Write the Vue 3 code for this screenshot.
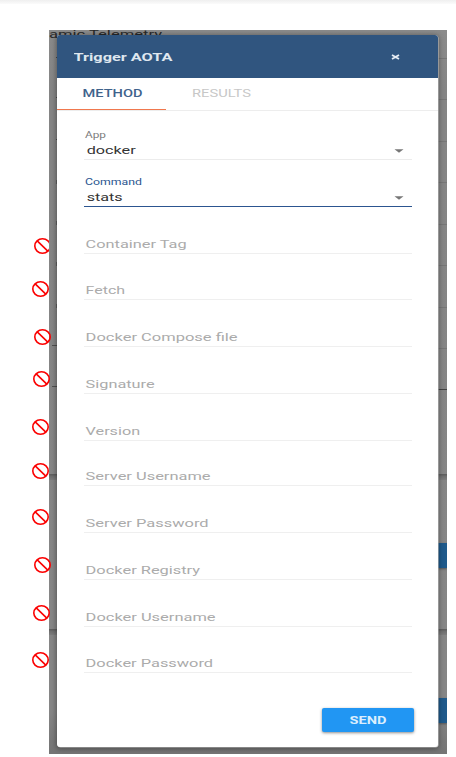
<script setup>
const fields = [
  { label: 'Container Tag', width: 101, height: 47 },
  { label: 'Fetch', width: 39.5, height: 46 },
  { label: 'Docker Compose file', width: 152, height: 47 },
  { label: 'Signature', width: 69, height: 47 },
  { label: 'Version', width: 54.5, height: 47 },
  { label: 'Server Username', width: 125, height: 45 },
  { label: 'Server Password', width: 123, height: 47 },
  { label: 'Docker Registry', width: 114.5, height: 47 },
  { label: 'Docker Username', width: 130, height: 47 },
  { label: 'Docker Password', width: 127.5, height: 46 },
]

const selects = [
  { label: 'App', labelWidth: 21, value: 'docker', valueWidth: 49, active: false },
  { label: 'Command', labelWidth: 57, value: 'stats', valueWidth: 36, active: true },
]

// Free-floating annotation marks beside the dialog
const marks = [
  { x: 34, y: 238, cut: true },
  { x: 32, y: 281 },
  { x: 34, y: 329 },
  { x: 33, y: 371 },
  { x: 32, y: 419 },
  { x: 32, y: 463 },
  { x: 32, y: 509 },
  { x: 34, y: 557 },
  { x: 33, y: 605 },
  { x: 32, y: 652 },
]

// Slivers of the dimmed page on either side of the dialog
const rules = [
  { y: 28, side: 'right', kind: 'thin' },
  { y: 69, side: 'right', kind: 'thin' },
  { y: 111, side: 'right', kind: 'thin' },
  { y: 152, side: 'right', kind: 'thin' },
  { y: 194, side: 'right', kind: 'thin' },
  { y: 235, side: 'right', kind: 'thin' },
  { y: 277, side: 'right', kind: 'thin' },
  { y: 318, side: 'right', kind: 'thin' },
  { y: 359, side: 'right', kind: 'dark' },
  { y: 444, side: 'both', kind: 'edge' },
  { y: 513, side: 'right', kind: 'button' },
  { y: 599, side: 'both', kind: 'edge' },
  { y: 668, side: 'right', kind: 'button' },
  { y: 27, side: 'tick', kind: 'dot' },
  { y: 67, side: 'tick', kind: 'dot' },
  { y: 109, side: 'tick', kind: 'dot' },
  { y: 150, side: 'tick', kind: 'dot tall' },
  { y: 191, side: 'tick', kind: 'dot tall' },
  { y: 232, side: 'tick', kind: 'dot tall' },
  { y: 274, side: 'tick', kind: 'dot tall' },
  { y: 315, side: 'tick', kind: 'dash' },
  { y: 356, side: 'tick', kind: 'dash' },
]
</script>

<template>
  <div class="page">
    <div class="topbar"></div>
    <main class="shot">
      <svg class="behind-title" width="120" height="12">
        <text x="0" y="8" textLength="113" lengthAdjust="spacingAndGlyphs">amic Telemetry</text>
      </svg>
      <i
        v-for="(r, i) in rules"
        :key="i"
        class="rule"
        :class="[r.side, r.kind]"
        :style="{ top: r.y + 'px' }"
      ></i>

      <section class="dialog">
        <header class="head">
          <svg width="110" height="21">
            <text x="-0.5" y="15" textLength="99" lengthAdjust="spacingAndGlyphs">Trigger AOTA</text>
          </svg>
          <svg class="close" width="9" height="6" viewBox="0 0 9 6">
            <path d="M1 .9L8 5.1M8 .9L1 5.1" />
          </svg>
        </header>
        <nav class="tabs">
          <div class="tab on">
            <svg width="70" height="16">
              <text x="-0.5" y="12.4" textLength="60" lengthAdjust="spacingAndGlyphs">METHOD</text>
            </svg>
          </div>
          <div class="tab">
            <svg width="70" height="16">
              <text x="0" y="12.4" textLength="59" lengthAdjust="spacingAndGlyphs">RESULTS</text>
            </svg>
          </div>
        </nav>

        <div class="form">
          <div v-for="s in selects" :key="s.label" class="select" :class="{ active: s.active }">
            <svg class="caption" width="80" height="14">
              <text x="1" y="9.5" :textLength="s.labelWidth" lengthAdjust="spacingAndGlyphs">{{ s.label }}</text>
            </svg>
            <div class="choice">
              <svg width="80" height="17">
                <text x="2.7" y="12.4" :textLength="s.valueWidth" lengthAdjust="spacingAndGlyphs">{{ s.value }}</text>
              </svg>
              <svg class="caret" width="10" height="4" viewBox="0 0 10 4">
                <path d="M.5 .3H9.5L5 3.8Z" />
              </svg>
            </div>
          </div>
          <div v-for="f in fields" :key="f.label" class="field" :style="{ height: f.height + 'px' }">
            <svg width="200" height="18">
              <text x="1.6" y="13" :textLength="f.width" lengthAdjust="spacingAndGlyphs">{{ f.label }}</text>
            </svg>
          </div>
        </div>

        <footer class="foot">
          <button class="send">
            <svg width="40" height="14">
              <text x="1.5" y="11" textLength="37" lengthAdjust="spacingAndGlyphs">SEND</text>
            </svg>
          </button>
        </footer>
      </section>
    </main>

    <svg
      v-for="(m, i) in marks"
      :key="i"
      class="mark"
      :class="{ cut: m.cut }"
      :style="{ left: m.x + 'px', top: m.y + 'px' }"
      width="17"
      height="16"
      viewBox="0 0 17 16"
    >
      <ellipse cx="8.5" cy="8" rx="7.7" ry="7.2" />
      <path d="M3.2 2.9L13.8 13.1" />
    </svg>
  </div>
</template>

<style>
body {
  margin: 0;
  background: #fff;
}
</style>

<style scoped>
.page {
  position: relative;
  width: 456px;
  height: 757px;
  overflow: hidden;
  font-family: Roboto, sans-serif;
}
.page svg {
  display: block;
  flex: none;
}
.topbar {
  height: 4px;
  margin-bottom: 26px;
  background: linear-gradient(#efefef, #fbfbfb);
}
.shot {
  position: relative;
  box-sizing: border-box;
  width: 398px;
  height: 724px;
  margin-left: 49px;
  padding: 5px 8px 0;
  overflow: hidden;
  background: linear-gradient(#8b8b8b, #858585 60px, #868686 680px, #757575 722px);
}
.behind-title {
  position: absolute;
  left: 0;
  top: 0;
  font-size: 11.3px;
  fill: #292929;
}
.rule {
  position: absolute;
}
.right {
  right: 0;
  width: 9px;
}
.both {
  left: 0;
  right: 0;
}
.thin {
  height: 1px;
  background: #777;
}
.dark {
  height: 1px;
  background: #444;
}
.edge {
  height: 6px;
  background: linear-gradient(#606060 0 1px, #6e6e6e 2px, #7d7d7d);
}
.button {
  height: 25px;
  background: #1f5a8b;
  box-shadow: 0 1px 2px #555;
}
.tick {
  left: 7px;
}
.dot {
  width: 2px;
  height: 1px;
  background: #4a4a4a;
}
.tall {
  height: 4px;
  background: #626262;
}
.dash {
  left: 3px;
  width: 5px;
  height: 1px;
  background: #505050;
}
.dialog {
  position: relative;
  width: 381px;
  height: 712px;
  border-radius: 3px;
  background: #fff;
  box-shadow: 0.6px 0.4px 0 0 #b8b8b8, 0 1px 5px 1px rgba(0, 0, 0, 0.35);
}
.head {
  display: flex;
  align-items: center;
  justify-content: space-between;
  box-sizing: border-box;
  height: 43px;
  padding: 0 38px 0 17px;
  border-radius: 3px 3px 0 0;
  background: #30557f;
  font-size: 11.6px;
  font-weight: 700;
  fill: #dfe7ef;
}
.close path {
  stroke: #e6ecf3;
  stroke-width: 1.8;
}
.tabs {
  display: flex;
  box-sizing: border-box;
  height: 33px;
  border-bottom: 1px solid #ededed;
  font-size: 11.5px;
  fill: #c7c7c7;
}
.tab {
  box-sizing: border-box;
  width: 109px;
  height: 32px;
  padding: 7px 0 0 26px;
}
.tab svg {
  overflow: visible;
}
.tab.on {
  border-bottom: 1px solid #f0784e;
  font-weight: 500;
  fill: #3f638c;
}
.form {
  display: flex;
  flex-direction: column;
  width: 328px;
  margin-left: 27px;
  padding-top: 17px;
}
.select {
  box-sizing: border-box;
  height: 47px;
  padding-top: 15px;
  border-bottom: 1px solid #ececec;
}
.select:first-child {
  height: 32px;
  padding-top: 0;
}
.caption {
  font-size: 9.5px;
  fill: #7c7c7c;
}
.choice {
  display: flex;
  align-items: center;
  justify-content: space-between;
  padding-right: 8px;
  font-size: 11.3px;
  fill: #333;
}
.caret {
  fill: #777;
}
.active {
  border-bottom-color: #2c5590;
}
.active .caption {
  fill: #2c5590;
}
.field {
  display: flex;
  align-items: flex-end;
  box-sizing: border-box;
  border-bottom: 1px solid #efefef;
  font-size: 11.3px;
  fill: #ababab;
}
.foot {
  display: flex;
  justify-content: flex-end;
  padding: 35px 24px 0 0;
}
.send {
  display: flex;
  align-items: center;
  justify-content: center;
  width: 92px;
  height: 24px;
  padding: 0;
  border: 0;
  border-radius: 2px;
  background: #2196f3;
  box-shadow: 0 1px 3px rgba(0, 0, 0, 0.45);
  font: 700 11px Roboto, sans-serif;
  fill: #dceefd;
}
.mark {
  position: absolute;
  fill: none;
  stroke: #fb0000;
  stroke-width: 1.6;
}
.cut {
  clip-path: inset(0 2px 0 0);
}
</style>
